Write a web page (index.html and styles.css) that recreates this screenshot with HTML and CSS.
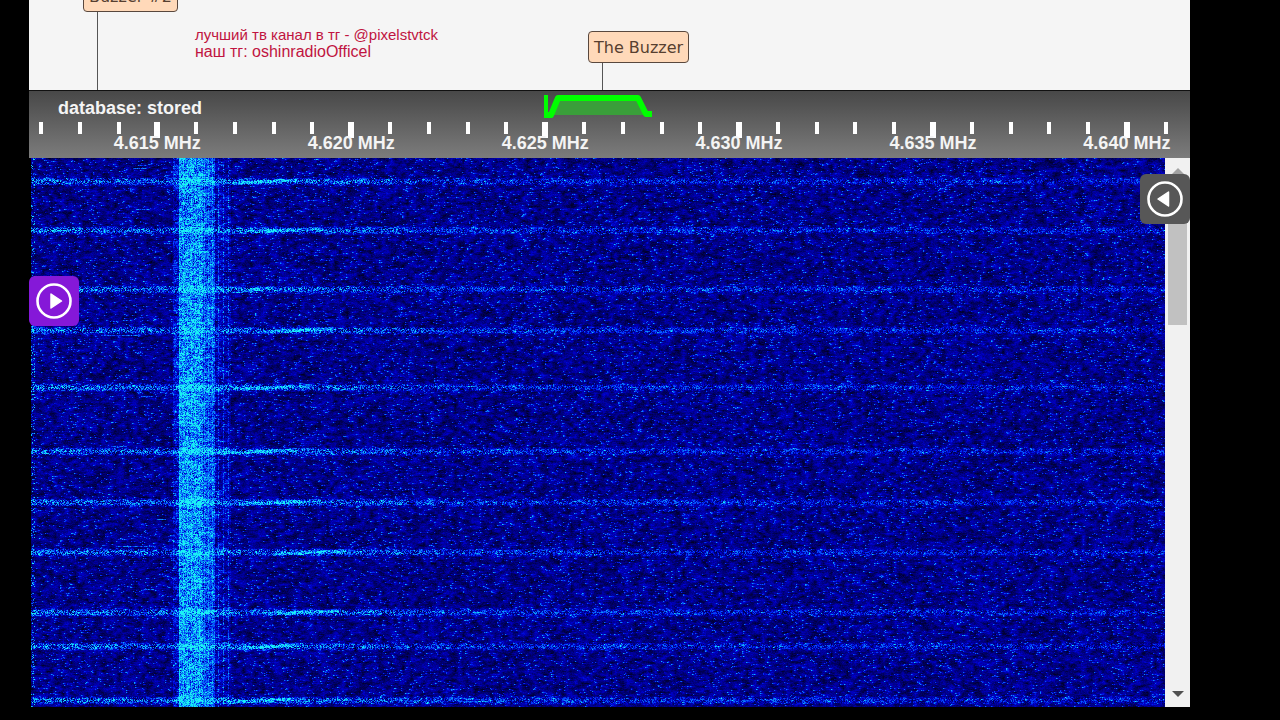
FILE: index.html
```html
<!DOCTYPE html>
<html lang="ru">
  <head>
    <meta charset="utf-8">
    <title>4625 kHz</title>
    <link rel="stylesheet" href="styles.css">
  </head>
  <body>
    <main class="receiver">
      <!-- Station labels -->
      <section class="stations">
        <div class="station station-second"><span class="station-name">Buzzer #2</span></div>
        <div class="station station-main"><span class="station-name">The Buzzer</span></div>
        <div class="promo">
          <p class="promo-small">лучший тв канал в тг - @pixelstvtck</p>
          <p class="promo-large">наш тг: oshinradioOfficel</p>
        </div>
      </section>

      <!-- Frequency scale -->
      <section class="scale">
        <div class="database">database: stored</div>
        <svg class="passband" width="112" height="26" viewBox="0 0 112 26">
          <path d="M9 22 L15 6 H94 L102 22 Z" fill="#3a9e3a" />
          <path d="M3 2 V23" fill="none" stroke="#0f0" stroke-width="4" />
          <path d="M1 22 H8 L15 5 H95 L103 21 H109" fill="none" stroke="#0f0" stroke-width="6" stroke-linejoin="round" />
        </svg>
        <ul class="ticks" id="ticks"></ul>
      </section>

      <!-- Waterfall -->
      <section class="waterfall">
        <canvas id="spectrum" class="spectrum"></canvas>
        <div class="scrollbar">
          <span class="arrow arrow-up"></span>
          <span class="thumb"></span>
          <span class="arrow arrow-down"></span>
        </div>
        <button class="toggle toggle-left" aria-label="Show left panel">
          <svg width="38" height="38" viewBox="0 0 38 38">
            <circle cx="19" cy="19" r="16.5" fill="none" stroke="#fff" stroke-width="2.6" />
            <path d="M16 12 L26.500 19 L16 26 Z" fill="#fff" stroke="#fff" stroke-width="1.500" stroke-linejoin="round" />
          </svg>
        </button>
        <button class="toggle toggle-right" aria-label="Show right panel">
          <svg width="38" height="38" viewBox="0 0 38 38">
            <circle cx="19" cy="19" r="16.5" fill="none" stroke="#fff" stroke-width="2.6" />
            <path d="M22.500 12 L12 19 L22.500 26 Z" fill="#fff" stroke="#fff" stroke-width="1.500" stroke-linejoin="round" />
          </svg>
        </button>
      </section>
    </main>
    <script src="waterfall.js"></script>
  </body>
</html>
```
FILE: styles.css
```css
* {
  box-sizing: border-box;
}
body {
  margin: 0;
  background-color: #000;
  font-family: "Liberation Sans", Arial, sans-serif;
}
.receiver {
  height: 100vh;
  padding: 0 90px 13px 29px;
  display: flex;
  flex-direction: column;
  overflow: hidden;
}
.stations {
  position: relative;
  height: 91px;
  flex-shrink: 0;
  background-color: #f5f5f5;
  border-bottom: 1px solid #111;
}
/* the stem runs from the label down to the scale */
.station {
  position: absolute;
  bottom: 0;
}
.station::after {
  content: "";
  position: absolute;
  left: 14px;
  top: 32px;
  bottom: 0;
  width: 1px;
  background-color: #555;
}
.station-main {
  left: 559px;
  top: 31px;
}
.station-second {
  left: 54px;
  top: -20px;
}
.station-name {
  display: block;
  height: 32px;
  padding: 0 5px;
  border: 1px solid #59483e;
  border-radius: 4px;
  background-color: #ffd9b9;
  color: #573f30;
  font-family: "DejaVu Sans", Verdana, sans-serif;
  font-size: 16px;
  line-height: 31px;
  white-space: nowrap;
}
.promo {
  padding: 26px 0 0 166px;
  color: #c01440;
}
.promo p {
  margin: 0;
  line-height: 17px;
}
.promo-small {
  font-size: 15px;
}
.promo-large {
  font-size: 16px;
}
.scale {
  position: relative;
  height: 67px;
  flex-shrink: 0;
  padding-top: 7px;
  background: linear-gradient(#484848, #7c7c7c);
  color: #f4f4f4;
  font-size: 18px;
  font-weight: bold;
}
.database {
  padding-left: 29px;
  line-height: 20px;
}
.passband {
  position: absolute;
  left: 514px;
  top: 2px;
}
.ticks {
  display: flex;
  justify-content: space-between;
  margin: 4px 22px 0 10px;
  padding: 0;
  list-style: none;
}
.tick {
  width: 4px;
  display: flex;
  flex-direction: column;
  align-items: center;
}
.tick::before {
  content: "";
  width: 4px;
  height: 12px;
  flex-shrink: 0;
  background-color: #fff;
}
.tick-major::before {
  width: 6px;
  height: 16px;
}
.tick span {
  margin-top: -5px;
  line-height: 20px;
  white-space: nowrap;
}
.waterfall {
  position: relative;
  flex: 1;
  min-height: 0;
  display: flex;
  background-color: #000;
}
.spectrum {
  display: block;
  flex: 1;
  min-width: 0;
  height: 100%;
  margin-left: 2px;
}
.scrollbar {
  width: 25px;
  display: flex;
  flex-direction: column;
  align-items: center;
  padding: 10px 0;
  background-color: #f1f1f1;
}
.arrow {
  border-left: 6px solid transparent;
  border-right: 6px solid transparent;
}
.arrow-up {
  border-bottom: 6px solid #a3a3a3;
}
.arrow-down {
  margin-top: auto;
  border-top: 6px solid #505050;
}
.thumb {
  width: 19px;
  height: 27%;
  margin-top: 8px;
  background-color: #c1c1c1;
}
.toggle {
  position: absolute;
  width: 50px;
  height: 50px;
  padding: 0;
  border: none;
  border-radius: 6px;
  display: flex;
  align-items: center;
  justify-content: center;
  cursor: pointer;
}
.toggle-left {
  left: 0;
  top: 118px;
  background-color: #8518d8;
}
.toggle-right {
  right: 0;
  top: 16px;
  background-color: #575757;
}
```
FILE: waterfall.js
```js
// Frequency ticks, one per kHz
const ticks = document.getElementById("ticks");
for (let khz = 4612; khz <= 4641; khz++) {
  const tick = document.createElement("li");
  tick.className = "tick";
  if (khz % 5 === 0) {
    tick.classList.add("tick-major");
    const label = document.createElement("span");
    label.textContent = (khz / 1000).toFixed(3) + " MHz";
    tick.appendChild(label);
  }
  ticks.appendChild(tick);
}

// Repeatable noise
let seed = 4625;
function random() {
  seed = (seed + 0x6d2b79f5) | 0;
  let t = Math.imul(seed ^ (seed >>> 15), 1 | seed);
  t = (t + Math.imul(t ^ (t >>> 7), 61 | t)) ^ t;
  return ((t ^ (t >>> 14)) >>> 0) / 4294967296;
}

// Buzzer pulses: row, first and last column of the bright sweep
const pulses = [
  [23, 200, 272], [72, 205, 290], [131, 205, 245], [172, 225, 305],
  [229, 205, 285], [293, 180, 275], [344, 205, 290], [394, 240, 320],
  [454, 230, 310], [488, 205, 275], [542, 195, 270]
];
// Short dashes: column, row, length
const dashes = [
  [107, 7, 9], [102, 10, 12], [105, 51, 14], [83, 24, 40],
  [70, 177, 40], [110, 238, 12], [80, 288, 16], [125, 361, 10],
  [113, 431, 10], [85, 388, 40]
];

const canvas = document.getElementById("spectrum");
const width = canvas.clientWidth;
const height = canvas.clientHeight;
canvas.width = width;
canvas.height = height;
const ctx = canvas.getContext("2d");
const image = ctx.createImageData(width, height);

// Level 0..1 to black - blue - cyan
function setPixel(x, y, level) {
  const i = (y * width + x) * 4;
  const v = Math.max(0, Math.min(1, level));
  image.data[i] = v > 0.4 ? (v - 0.4) * 50 : 0;
  image.data[i + 1] = v > 0.34 ? Math.min(240, (v - 0.34) * 480) : 0;
  image.data[i + 2] = Math.min(245, 30 + v * 500);
  image.data[i + 3] = 255;
}

// Coarse noise gives the dark and light patches of the background
const cols = Math.ceil(width / 4) + 2;
const rows = Math.ceil(height / 3) + 2;
const coarse = new Float32Array(cols * rows);
for (let i = 0; i < coarse.length; i++) {
  coarse[i] = random();
}
function patch(x, y) {
  const cx = Math.floor(x / 4);
  const cy = Math.floor(y / 3);
  const fx = x / 4 - cx;
  const fy = y / 3 - cy;
  const i = cy * cols + cx;
  const top = coarse[i] + (coarse[i + 1] - coarse[i]) * fx;
  const bottom = coarse[i + cols] + (coarse[i + cols + 1] - coarse[i + cols]) * fx;
  return top + (bottom - top) * fy;
}

for (let y = 0; y < height; y++) {
  // a speckle is two pixels wide, the second one weaker
  let speckle = 0;
  let grain = 0;
  for (let x = 0; x < width; x++) {
    grain = grain * 0.4 + random() * 0.6;
    let level = patch(x, y) * 0.26 + grain * 0.2 - 0.03;
    speckle = random() < 0.042 ? 0.16 + random() * 0.28 : speckle * 0.45;
    level += speckle;

    // carrier
    if (x >= 148 && x < 172) {
      level += 0.16 + random() * 0.5 + (x % 4 === 0 ? 0.1 : 0);
    } else if (x >= 172 && x < 184) {
      level += 0.1 + random() * 0.35 + (x % 4 === 1 ? 0.12 : 0);
    } else if (x >= 184 && x < 200) {
      level += random() * (x % 5 === 2 ? 0.4 : 0.14);
    } else if (x >= 142 && x < 148) {
      level += random() * 0.22;
    }

    // pulses fade out to the right
    for (const [row, from, to] of pulses) {
      const d = Math.abs(y - row);
      if (d < 5) {
        let fade = 0.27 + 0.42 * Math.exp(-x / 420);
        if (x > 184 && x < to + 90) {
          fade += 0.12;
        }
        const spread = [1, 0.95, 0.8, 0.5, 0.15][d];
        if (random() < 0.75) {
          level += fade * spread * random();
        }
        if (x > from && x < to) {
          const along = (x - from) / (to - from);
          const sweep = row + 2 - along * 4;
          const strength = 0.15 + 0.3 * Math.sin(along * Math.PI);
          if (Math.abs(y - sweep) < 1.6) {
            level += strength * (0.2 + random());
          }
        }
      }
    }

    if (x < 4 && random() < 0.25) {
      level += random() * 0.6;
    }
    setPixel(x, y, level);
  }
}

for (const [x, y, length] of dashes) {
  for (let i = 0; i < length && x + i < width && y < height; i++) {
    setPixel(x + i, y, 0.3 + random() * 0.4);
  }
}

ctx.putImageData(image, 0, 0);
```
